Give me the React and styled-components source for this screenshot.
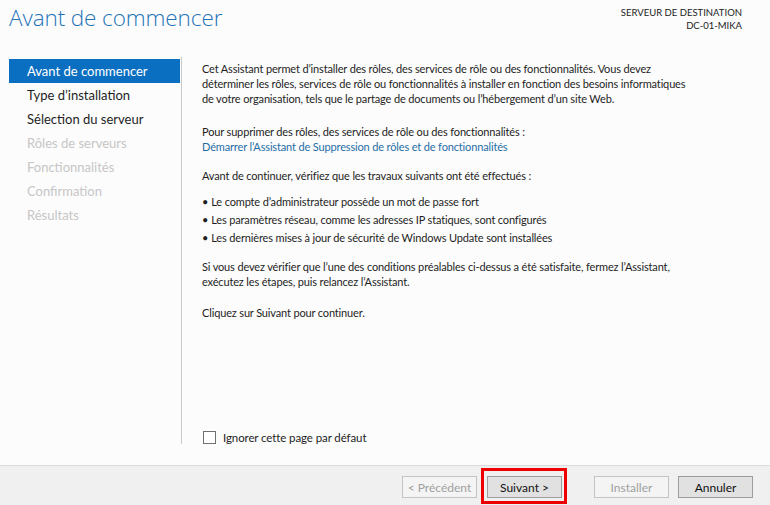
import React from "react";
import styled, { createGlobalStyle } from "styled-components";

const Global = createGlobalStyle`
  html, body { margin: 0; padding: 0; background: #fcfcfc; }
  body { font-family: "Lato", "Liberation Sans", sans-serif; color: #1e1e1e; }
  * { box-sizing: border-box; }
`;

const Window = styled.div`
  width: 770px;
  height: 505px;
  display: flex;
  flex-direction: column;
  background: #fcfcfc;
  overflow: hidden;
`;

const Header = styled.header`
  height: 57px;
  display: flex;
  justify-content: space-between;
  align-items: flex-start;
  padding: 0 28px 0 9px;
`;

const Title = styled.h1`
  margin: 2px 0 0;
  font-family: "Open Sans", "Liberation Sans", sans-serif;
  font-weight: 300;
  font-size: 22.5px;
  line-height: 32px;
  color: #1f74b8;
  letter-spacing: -0.1px;
`;

const ServerInfo = styled.div`
  margin-top: 6px;
  text-align: right;
  font-size: 9.5px;
  line-height: 13px;
  color: #222;
`;

const Body = styled.div`
  flex: 1;
  display: flex;
  min-height: 0;
  margin-bottom: 21px;
`;

const Nav = styled.nav`
  width: 182px;
  border-right: 1px solid #c9c9c9;
  padding-top: 2px;
  display: flex;
  flex-direction: column;
`;

const NavItem = styled.div`
  height: 24px;
  margin: 0 1px 0 9px;
  padding-left: 18px;
  display: flex;
  align-items: center;
  font-size: 13px;
  color: ${(p) => (p.$selected ? "#ffffff" : p.$disabled ? "#c6c6c6" : "#1e1e1e")};
  background: ${(p) => (p.$selected ? "#0b6fc1" : "transparent")};
`;

const Content = styled.div`
  flex: 1;
  padding: 4px 20px 0 20px;
  display: flex;
  flex-direction: column;
  font-size: 11px;
  letter-spacing: -0.15px;
  line-height: 15px;
`;

const Para = styled.p`
  margin: ${(p) => p.$mt || 0}px 0 0;
`;

const Link = styled.a`
  color: #1f6ea6;
  text-decoration: none;
`;

const Bullets = styled.ul`
  margin: ${(p) => p.$mt || 0}px 0 0;
  padding: 0;
  list-style: none;
`;

const Bullet = styled.li`
  line-height: 18px;
  display: flex;
  gap: 3px;
  &::before {
    content: "•";
    font-size: 11px;
  }
`;

const Spacer = styled.div`
  flex: 1;
`;

const CheckRow = styled.label`
  display: flex;
  align-items: center;
  gap: 7px;
  padding-left: 1px;
  font-size: 11.5px;
  letter-spacing: -0.1px;
  height: 13px;
`;

const CheckBox = styled.span`
  width: 13px;
  height: 13px;
  border: 1px solid #707070;
  background: #fff;
`;

const Footer = styled.footer`
  height: 40px;
  background: #f0f0f0;
  border-top: 1px solid #dadada;
  display: flex;
  justify-content: flex-end;
  align-items: flex-start;
  padding: 10px 17px 0 0;
`;

const Button = styled.button`
  width: 75px;
  height: 22px;
  margin-left: ${(p) => p.$ml || 0}px;
  font-family: "Lato", "Liberation Sans", sans-serif;
  font-size: 12px;
  padding: 0;
  border: 1px solid ${(p) => (p.disabled ? "#c4c4c4" : "#9d9d9d")};
  background: ${(p) => (p.disabled ? "#f4f4f4" : "#e1e1e1")};
  color: ${(p) => (p.disabled ? "#a0a0a0" : "#111")};
  position: relative;
  ${(p) =>
    p.$highlight &&
    `
    &::after {
      content: "";
      position: absolute;
      left: -7px;
      right: -6px;
      top: -9px;
      bottom: -7px;
      border: 3px solid #ee0000;
    }
  `}
`;

const navItems = [
  { label: "Avant de commencer", selected: true },
  { label: "Type d’installation" },
  { label: "Sélection du serveur" },
  { label: "Rôles de serveurs", disabled: true },
  { label: "Fonctionnalités", disabled: true },
  { label: "Confirmation", disabled: true },
  { label: "Résultats", disabled: true },
];

export default function App() {
  return (
    <>
      <Global />
      <Window>
        <Header>
          <Title>Avant de commencer</Title>
          <ServerInfo>
            SERVEUR DE DESTINATION
            <br />
            DC-01-MIKA
          </ServerInfo>
        </Header>
        <Body>
          <Nav>
            {navItems.map((it) => (
              <NavItem key={it.label} $selected={it.selected} $disabled={it.disabled}>
                {it.label}
              </NavItem>
            ))}
          </Nav>
          <Content>
            <Para>
              Cet Assistant permet d’installer des rôles, des services de rôle ou des fonctionnalités. Vous devez
              <br />
              déterminer les rôles, services de rôle ou fonctionnalités à installer en fonction des besoins informatiques
              <br />
              de votre organisation, tels que le partage de documents ou l’hébergement d’un site Web.
            </Para>
            <Para $mt={18}>
              Pour supprimer des rôles, des services de rôle ou des fonctionnalités :
              <br />
              <Link href="#">Démarrer l’Assistant de Suppression de rôles et de fonctionnalités</Link>
            </Para>
            <Para $mt={14}>Avant de continuer, vérifiez que les travaux suivants ont été effectués :</Para>
            <Bullets $mt={10}>
              <Bullet>Le compte d’administrateur possède un mot de passe fort</Bullet>
              <Bullet>Les paramètres réseau, comme les adresses IP statiques, sont configurés</Bullet>
              <Bullet>Les dernières mises à jour de sécurité de Windows Update sont installées</Bullet>
            </Bullets>
            <Para $mt={12}>
              Si vous devez vérifier que l’une des conditions préalables ci-dessus a été satisfaite, fermez l’Assistant,
              <br />
              exécutez les étapes, puis relancez l’Assistant.
            </Para>
            <Para $mt={16}>Cliquez sur Suivant pour continuer.</Para>
            <Spacer />
            <CheckRow>
              <CheckBox />
              Ignorer cette page par défaut
            </CheckRow>
          </Content>
        </Body>
        <Footer>
          <Button disabled>&lt; Précédent</Button>
          <Button $ml={10} $highlight>
            Suivant &gt;
          </Button>
          <Button $ml={32} disabled>
            Installer
          </Button>
          <Button $ml={9}>Annuler</Button>
        </Footer>
      </Window>
    </>
  );
}
